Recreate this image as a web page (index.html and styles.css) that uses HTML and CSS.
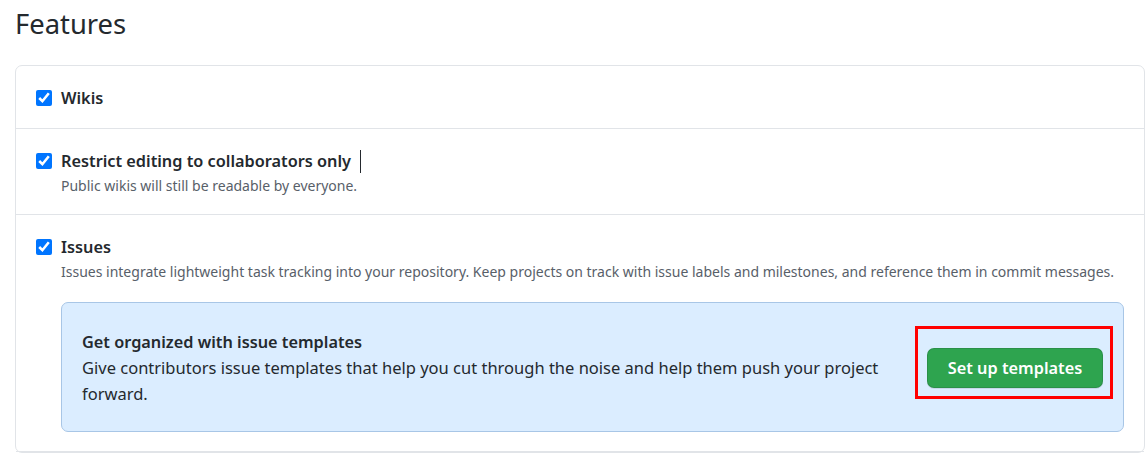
FILE: index.html
```html
<!DOCTYPE html>
<html lang="en">
<head>
<meta charset="utf-8">
<title>Features</title>
<link rel="stylesheet" href="styles.css">
</head>
<body>
<div class="page">
  <h2 class="heading">Features</h2>
  <div class="box">
    <div class="row row-first">
      <label class="item">
        <input type="checkbox" class="check" checked>
        <span class="item-body">
          <span class="title">Wikis</span>
        </span>
      </label>
    </div>
    <div class="row row-mid">
      <label class="item">
        <input type="checkbox" class="check" checked>
        <span class="item-body">
          <span class="title">Restrict editing to collaborators only<span class="caret"></span></span>
          <span class="note">Public wikis will still be readable by everyone.</span>
        </span>
      </label>
    </div>
    <div class="row">
      <label class="item">
        <input type="checkbox" class="check" checked>
        <span class="item-body">
          <span class="title">Issues</span>
          <span class="note">Issues integrate lightweight task tracking into your repository. Keep projects on track with issue labels and milestones, and reference them in commit messages.</span>
        </span>
      </label>
      <div class="flash">
        <div class="flash-text">
          <div class="flash-title">Get organized with issue templates</div>
          <div class="flash-desc">Give contributors issue templates that help you cut through the noise and help them push your project forward.</div>
        </div>
        <div class="flash-action">
          <button class="btn" type="button">Set up templates</button>
          <span class="highlight"></span>
        </div>
      </div>
    </div>
  </div>
</div>
</body>
</html>
```
FILE: styles.css
```css
html, body {
  margin: 0;
  padding: 0;
  background: #ffffff;
}
body {
  font-family: "Noto Sans", "Open Sans", "Liberation Sans", sans-serif;
  color: #24292e;
}
.page {
  padding: 0 4px 0 15px;
}
.heading {
  margin: 0;
  padding-top: 4px;
  height: 61px;
  font-size: 27.4px;
  font-weight: 400;
  line-height: 40px;
}
.box {
  border: 1px solid #e1e4e8;
  border-radius: 7px;
  width: 1128px;
}
.row {
  border-bottom: 1px solid #e1e4e8;
  padding: 20px 20px 19px 20px;
}
.row-first {
  padding: 20px 20px 18px 20px;
}
.row-mid {
  padding: 20px 20px 17px 20px;
}
.item {
  display: flex;
  align-items: flex-start;
}
.check {
  margin: 4px 9px 0 0;
  width: 16px;
  height: 16px;
  accent-color: #0075ff;
  flex: none;
}
.item-body {
  display: flex;
  flex-direction: column;
}
.title {
  font-size: 16.3px;
  font-weight: 600;
  line-height: 24px;
  display: flex;
  align-items: center;
}
.caret {
  display: inline-block;
  width: 1px;
  height: 23px;
  background: #24292e;
  margin-left: 9px;
}
.note {
  margin-top: 2px;
  font-size: 14px;
  line-height: 22px;
  color: #586069;
}
.flash {
  margin: 19px 0 0 25px;
  background: #dbedff;
  border: 1px solid #a8c6e6;
  border-radius: 7px;
  padding: 26px 20px 24px 20px;
  display: flex;
  align-items: center;
  justify-content: space-between;
}
.flash-text {
  max-width: 810px;
}
.flash-title {
  font-size: 16.3px;
  font-weight: 600;
  line-height: 26px;
}
.flash-desc {
  font-size: 16.5px;
  line-height: 26px;
}
.flash-action {
  position: relative;
  flex: none;
}
.btn {
  display: block;
  width: 176px;
  height: 40px;
  background: #2ea44f;
  color: #ffffff;
  border: 1px solid rgba(27, 31, 35, 0.15);
  border-radius: 7px;
  font-family: inherit;
  font-size: 16.3px;
  font-weight: 600;
  padding: 0;
  box-shadow: 0 1px 0 rgba(27, 31, 35, 0.1);
}
.highlight {
  position: absolute;
  left: -12px;
  top: -22px;
  right: -10px;
  bottom: -11px;
  border: 3px solid #ff0000;
  pointer-events: none;
}
```
